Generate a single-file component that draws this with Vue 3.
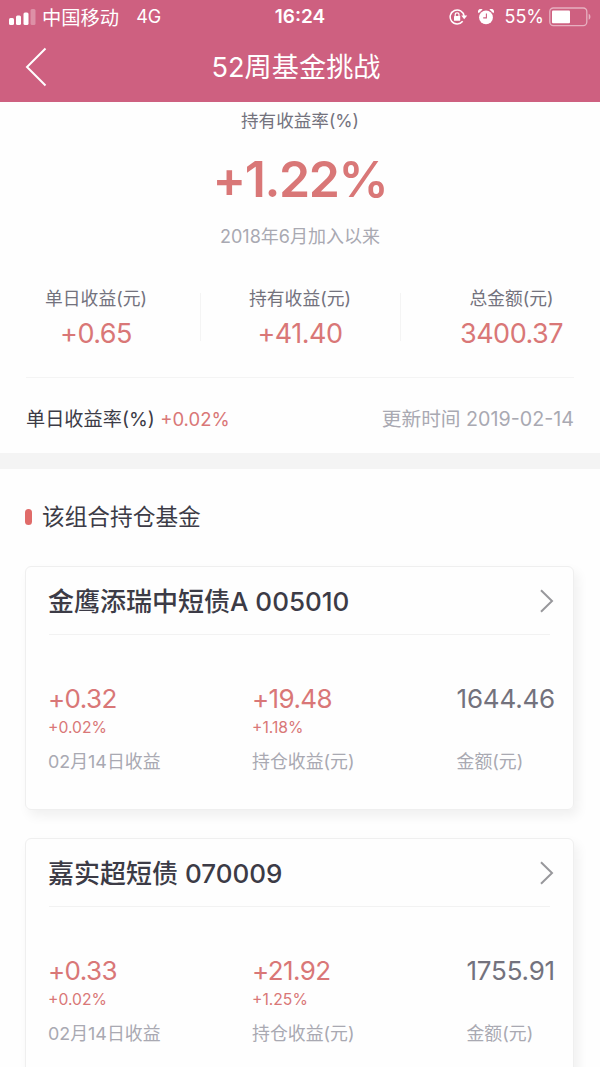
<template>
  <div class="page">
    <header class="header">
      <div class="status-bar">
        <div class="status-left">
          <svg class="signal" width="27" height="16" viewBox="0 0 27 16" fill="#fff">
            <rect x="0" y="9" width="5" height="7" rx="1.5" />
            <rect x="7" y="6.5" width="5" height="9.5" rx="1.5" />
            <rect x="14.5" y="3.5" width="5" height="12.5" rx="1.5" />
            <rect x="21.5" y="0" width="5" height="16" rx="1.5" opacity="0.3" />
          </svg>
          <span class="carrier">中国移动</span>
          <span class="network">4G</span>
        </div>
        <span class="clock">16:24</span>
        <div class="status-right">
          <svg class="lock" width="19" height="16" viewBox="0 0 19 16" fill="none" stroke="#fff" stroke-width="1.5">
            <path d="M13.7 12.2A7 7 0 1 1 15.1 7" />
            <path d="M12.3 6.6H18.2L15.2 10.3Z" fill="#fff" stroke="none" />
            <rect x="5" y="7" width="6.2" height="4.8" rx="0.6" fill="#fff" stroke="none" />
            <path d="M6.2 7.2V5.8a1.9 1.9 0 0 1 3.8 0V7.2" stroke-width="1.2" />
          </svg>
          <svg class="alarm" width="16" height="16" viewBox="0 0 16 16">
            <path d="M0.6 4.2A2.7 2.7 0 0 1 4.6 0.6ZM11.4 0.6A2.7 2.7 0 0 1 15.4 4.2Z" fill="#fff" />
            <circle cx="8" cy="8.4" r="6.9" fill="#fff" />
            <path d="M8.4 4.6V8.9H5.2" stroke="#ce6080" stroke-width="1.1" fill="none" />
          </svg>
          <span class="percent">55%</span>
          <svg class="battery" width="43" height="20" viewBox="0 0 43 20">
            <rect x="0.8" y="1" width="37" height="17.6" rx="3.5" fill="none" stroke="#fff" stroke-opacity="0.5" stroke-width="1.3" />
            <rect x="3" y="3.5" width="18" height="12.7" rx="1" fill="#fff" />
            <path d="M39.7 6.8c2.3 1 2.3 5 0 6z" fill="#fff" opacity="0.5" />
          </svg>
        </div>
      </div>
      <div class="nav-bar">
        <svg class="back" width="22" height="40" viewBox="0 0 22 40" fill="none" stroke="#fff" stroke-width="2">
          <path d="M20.5 1.5L2 20L20.5 38.5" />
        </svg>
        <h1>52周基金挑战</h1>
      </div>
    </header>

    <section class="overview">
      <p class="rate-label">持有收益率(%)</p>
      <p class="rate">+1.22%</p>
      <p class="since">2018年6月加入以来</p>
      <div class="stats">
        <div v-for="stat in stats" :key="stat.label" class="stat">
          <p class="stat-label">{{ stat.label }}</p>
          <p class="stat-value">{{ stat.value }}</p>
        </div>
      </div>
      <div class="daily">
        <p class="daily-rate">单日收益率(%) <span>+0.02%</span></p>
        <p class="updated">更新时间 2019-02-14</p>
      </div>
    </section>

    <section class="holdings">
      <h2>该组合持仓基金</h2>
      <article v-for="fund in funds" :key="fund.code" class="card">
        <div class="card-head">
          <h3>{{ fund.name }} {{ fund.code }}</h3>
          <svg width="14" height="24" viewBox="0 0 14 24" fill="none" stroke="#98989c" stroke-width="2">
            <path d="M1 1.2L12 12L1 22.8" />
          </svg>
        </div>
        <div class="card-body">
          <div class="item">
            <p class="item-value">{{ fund.daily }}</p>
            <p class="item-rate">{{ fund.dailyRate }}</p>
            <p class="item-label">02月14日收益</p>
          </div>
          <div class="item">
            <p class="item-value">{{ fund.profit }}</p>
            <p class="item-rate">{{ fund.profitRate }}</p>
            <p class="item-label">持仓收益(元)</p>
          </div>
          <div class="item">
            <p class="item-value amount">{{ fund.amount }}</p>
            <p class="item-rate"></p>
            <p class="item-label">金额(元)</p>
          </div>
        </div>
      </article>
    </section>
  </div>
</template>

<script setup>
const stats = [
  { label: '单日收益(元)', value: '+0.65' },
  { label: '持有收益(元)', value: '+41.40' },
  { label: '总金额(元)', value: '3400.37' },
];

const funds = [
  {
    name: '金鹰添瑞中短债A',
    code: '005010',
    daily: '+0.32',
    dailyRate: '+0.02%',
    profit: '+19.48',
    profitRate: '+1.18%',
    amount: '1644.46',
  },
  {
    name: '嘉实超短债',
    code: '070009',
    daily: '+0.33',
    dailyRate: '+0.02%',
    profit: '+21.92',
    profitRate: '+1.25%',
    amount: '1755.91',
  },
];
</script>

<style>
body {
  margin: 0;
  background: #fefefe;
}
</style>

<style scoped>
.page {
  width: 600px;
  height: 1067px;
  overflow: hidden;
  background: #fefefe;
  color: #3c3b46;
  font-family: Inter, 'Noto Sans CJK SC', sans-serif;
  font-weight: 385;
}
p,
h1,
h2,
h3 {
  margin: 0;
  font-weight: 385;
  white-space: nowrap;
}
.header {
  height: 102px;
  background: #ce6080;
  color: #fff;
}
.status-bar {
  display: grid;
  grid-template-columns: 1fr auto 1fr;
  align-items: center;
  height: 33px;
  padding: 0 9px;
  box-sizing: border-box;
}
.status-left,
.status-right {
  display: flex;
  align-items: center;
  font-size: 18px;
}
.status-right {
  justify-content: flex-end;
}
.carrier {
  margin-left: 6px;
  font-size: 19.3px;
}
.network {
  margin-left: 17px;
}
.clock {
  font-size: 19px;
  font-weight: 600;
}
.alarm {
  margin-left: 10px;
}
.percent {
  margin: 0 5px 0 10px;
}
.battery {
  margin-right: -1px;
}
.nav-bar {
  display: grid;
  grid-template-columns: 60px 1fr 68px;
  align-items: center;
  height: 68px;
}
.back {
  margin-left: 25px;
}
h1 {
  padding-top: 2px;
  text-align: center;
  font-size: 27.2px;
  line-height: 40px;
}
.overview {
  height: 351px;
  border-bottom: 16px solid #f4f4f4;
  text-align: center;
}
.rate-label {
  padding-top: 5px;
  font-size: 17.6px;
  line-height: 28px;
  color: #73727d;
}
.rate {
  margin-top: 12px;
  font-size: 50px;
  font-weight: 600;
  line-height: 64px;
  letter-spacing: -1.4px;
  color: #d97777;
}
.since {
  margin-top: 12px;
  font-size: 18px;
  line-height: 28px;
  color: #a9a9b2;
}
.stats {
  display: grid;
  grid-template-columns: 174px 200px 174px;
  margin: 34px 26px 0;
  height: 92px;
  border-bottom: 1px solid #f4f4f4;
}
.stat {
  height: 56px;
}
.stat + .stat {
  background: linear-gradient(#f4f4f4, #f4f4f4) left 8px / 1px 48px no-repeat;
}
.stat:first-child {
  padding-right: 34px;
}
.stat:last-child {
  padding-left: 49px;
}
.stat-label {
  font-size: 17.8px;
  line-height: 28px;
  color: #73727d;
}
.stat-value {
  margin-top: 3px;
  font-size: 27px;
  line-height: 36px;
  letter-spacing: -0.5px;
  color: #d97777;
}
.daily {
  display: flex;
  justify-content: space-between;
  margin: 26px 26px 0;
  font-size: 19.2px;
  line-height: 30px;
}
.daily-rate span {
  font-size: 18.5px;
  color: #d97777;
}
.updated {
  font-size: 19.7px;
  color: #a9a9b2;
}
.holdings {
  padding: 33px 26px 0 25px;
}
h2 {
  display: flex;
  align-items: center;
  height: 30px;
  font-size: 22.7px;
  line-height: 30px;
}
h2::before {
  content: '';
  width: 7px;
  height: 16px;
  margin-right: 10px;
  border-radius: 3.5px;
  background: #e06b69;
}
.card {
  height: 244px;
  margin-top: 34px;
  padding: 0 23px;
  box-sizing: border-box;
  border: 1px solid #efefef;
  border-radius: 6px;
  box-shadow: 4px 6px 12px rgba(0, 0, 0, 0.06);
}
.card + .card {
  margin-top: 28px;
}
.card-head {
  display: flex;
  align-items: center;
  justify-content: space-between;
  height: 67px;
  border-bottom: 1px solid #f2f2f2;
}
.card-head svg {
  margin-right: -4px;
}
h3 {
  margin: -2px 0 0 -1px;
  font-size: 26px;
  font-weight: 500;
}
.card-body {
  display: grid;
  grid-template-columns: 204px 1fr auto;
  margin: 46px -5px 0 -1px;
}
.item-value {
  font-size: 26px;
  line-height: 36px;
  letter-spacing: -0.6px;
  color: #d97777;
}
.item-value.amount {
  letter-spacing: -0.2px;
  color: #73727d;
}
.item-rate {
  height: 22px;
  font-size: 15.7px;
  line-height: 22px;
  color: #d97777;
}
.item-label {
  margin-top: 9px;
  font-size: 17.9px;
  line-height: 28px;
  color: #a9a9b2;
}
</style>
